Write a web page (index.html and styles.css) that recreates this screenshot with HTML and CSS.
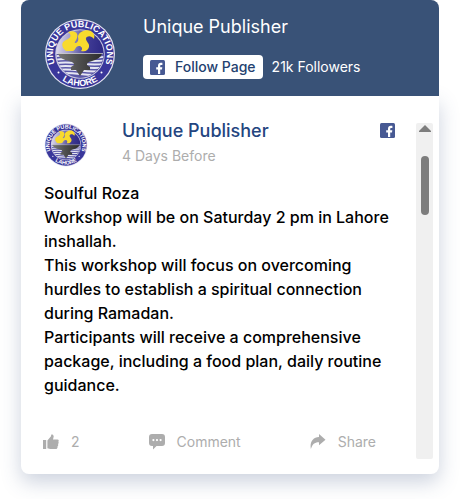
FILE: index.html
```html
<!DOCTYPE html>
<html lang="en">
<head>
<meta charset="utf-8">
<meta name="viewport" content="width=device-width, initial-scale=1">
<title>Unique Publisher</title>
<link rel="stylesheet" href="styles.css">
</head>
<body>
<main class="widget">
  <header class="page-head">
    <svg class="logo-large" viewBox="0 0 72 72" role="img" aria-label="Unique Publications Lahore">
      <defs>
        <linearGradient id="disc" x1="0" y1="0.3" x2="1" y2="0.4">
          <stop offset="0" stop-color="#dedaec"/>
          <stop offset="0.3" stop-color="#9d98ca"/>
          <stop offset="0.65" stop-color="#403b95"/>
          <stop offset="1" stop-color="#2c2883"/>
        </linearGradient>
        <linearGradient id="iron" x1="0" y1="0" x2="1" y2="0">
          <stop offset="0" stop-color="#777"/>
          <stop offset="0.45" stop-color="#505050"/>
          <stop offset="1" stop-color="#2c2c2c"/>
        </linearGradient>
        <clipPath id="inner"><circle cx="36" cy="36" r="23.5"/></clipPath>
        <path id="arc-top" d="M11 46.2A27 27 0 1 1 61 46.2"/>
        <path id="arc-bottom" d="M10 54.6A32 32 0 0 0 62 54.6"/>
      </defs>
      <g id="logo">
        <circle cx="36" cy="36" r="35" fill="#e4e4f2"/>
        <circle cx="36" cy="36" r="33.8" fill="#3a379b"/>
        <circle cx="36" cy="36" r="24.8" fill="#c9c9e0"/>
        <circle cx="36" cy="36" r="23.8" fill="url(#disc)"/>
        <g clip-path="url(#inner)">
          <path d="M10 36H62V62H10Z" fill="#5a57a8"/>
          <path d="M10 38.5Q20 36.5 36 38.5T62 38.5M10 42Q20 40 36 42T62 42M10 45.5Q20 43.5 36 45.5T62 45.5M10 49Q20 47 36 49T62 49M10 52.5Q20 50.5 36 52.5T62 52.5M10 56Q20 54 36 56T62 56" fill="none" stroke="#e6e6f2" stroke-width="1.8"/>
        </g>
        <path d="M14 35.5H58C57 40 52 42 48 43C44 44 43 45 43 47L46 49V52H40L36 58L32 52H27V49L30 47C30 45 29 44 25 43C20 42 15 40 14 35.5Z" fill="url(#iron)"/>
        <path d="M13 35.5H59" stroke="#dcdcdc" stroke-width="0.7"/>
        <path d="M22 33C17 29 17 24 22 22C27 20 28 17 24 14C30 12 35 15 33 20C32 23 30 24 31 25C33 25 35 23 34 19C34 14 42 11 47 13C50 15 51 18 50 21C47 17 43 18 42 20C41 23 46 25 45 29C44 32 42 34 37 33C39 31 38 29 36 28C31 27 32 33 28 33Z" fill="#f8da2d"/>
        <g class="logo-text">
          <text><textPath href="#arc-top" startOffset="50%">UNIQUE PUBLICATIONS</textPath></text>
          <text><textPath href="#arc-bottom" startOffset="50%">LAHORE</textPath></text>
        </g>
        <circle cx="14.5" cy="54.5" r="1" fill="#fff"/>
        <circle cx="57.5" cy="54.5" r="1" fill="#fff"/>
      </g>
    </svg>
    <div class="page-info">
      <h1 class="page-name">Unique Publisher</h1>
      <div class="page-actions">
        <button class="follow" type="button">
          <svg class="fb-icon" viewBox="0 0 15 15" aria-hidden="true">
            <g id="facebook">
              <rect width="15" height="15" rx="1.5" fill="#475993"/>
              <path d="M8 14V9.5H6.2V7.3H8V5.7C8 3.8 9.1 2.8 10.8 2.8C11.6 2.8 12.3 2.9 12.4 2.9V4.9H11.3C10.4 4.9 10.2 5.3 10.2 6V7.3H12.3L12 9.5H10.2V14Z" fill="#fff"/>
            </g>
          </svg>
          Follow Page
        </button>
        <span class="followers">21k Followers</span>
      </div>
    </div>
  </header>

  <section class="feed">
    <article class="post">
      <header class="post-head">
        <svg class="logo-small" viewBox="0 0 72 72" aria-hidden="true"><use href="#logo"/></svg>
        <div class="post-info">
          <h2 class="post-author">Unique Publisher</h2>
          <p class="post-date">4 Days Before</p>
        </div>
        <svg class="fb-icon" viewBox="0 0 15 15" aria-hidden="true"><use href="#facebook"/></svg>
      </header>
      <p class="post-text">Soulful Roza<br>Workshop will be on Saturday 2 pm in Lahore inshallah.<br>This workshop will focus on overcoming hurdles to establish a spiritual connection during Ramadan.<br>Participants will receive a comprehensive package, including a food plan, daily routine guidance.</p>
      <footer class="post-actions">
        <button class="action" type="button" aria-label="Like, 2">
          <svg class="action-icon" viewBox="0 0 16 16" aria-hidden="true"><path d="M0 6H3.2V15H0ZM4.4 6.4L8 2.3L8.2 .8C8.5 0 10.7 .3 10.7 2.6L10 5.6H14.5C16 5.8 16 7.3 15.3 7.8C16 8.6 15.7 9.6 15 10C15.5 11 15.2 11.9 14.5 12.4C14.8 13.9 14 15 12.7 15H7.2L4.4 14.2Z"/></svg>
          2
        </button>
        <button class="action" type="button">
          <svg class="action-icon" viewBox="0 0 16 16" aria-hidden="true"><path fill-rule="evenodd" d="M3 0H13Q16 0 16 3V9Q16 12 13 12H7.5L4 15.5V12H3Q0 12 0 9V3Q0 0 3 0ZM4.4 5A1.1 1.1 0 1 0 4.4 7.2A1.1 1.1 0 1 0 4.4 5ZM8 5A1.1 1.1 0 1 0 8 7.2A1.1 1.1 0 1 0 8 5ZM11.6 5A1.1 1.1 0 1 0 11.6 7.2A1.1 1.1 0 1 0 11.6 5Z"/></svg>
          Comment
        </button>
        <button class="action" type="button">
          <svg class="action-icon" viewBox="0 0 16 16" aria-hidden="true"><path d="M9 0L15.5 5.7L9 11.3V8.2C5 8 2.3 10 .9 15C-.5 8.5 2.8 3.2 9 3Z"/></svg>
          Share
        </button>
      </footer>
    </article>
    <div class="scroll-track" aria-hidden="true">
      <svg class="scroll-arrow" viewBox="0 0 12 7"><path d="M6 0L12 6V7H0V6Z"/></svg>
      <div class="scroll-thumb"></div>
    </div>
  </section>
</main>
</body>
</html>
```
FILE: styles.css
```css
* {
  box-sizing: border-box;
}

body {
  margin: 0;
  padding-bottom: 25px;
  background: #fff;
  color: #000;
  font-family: Inter, "Liberation Sans", sans-serif;
  font-size: 16px;
  line-height: 24px;
}

h1,
h2,
p {
  margin: 0;
}

button {
  border: 0;
  font: inherit;
  cursor: pointer;
}

svg {
  flex: none;
  display: block;
}

.logo-text {
  fill: #fff;
  font-family: "Liberation Sans", sans-serif;
  font-size: 9px;
  font-weight: 700;
  text-anchor: middle;
}

.widget {
  margin: 0 21px;
}

.page-head {
  position: relative;
  display: flex;
  gap: 27px;
  padding: 15px 23px 6px;
  border-radius: 8px 8px 0 0;
  background: #395277;
  color: #fff;
}

.logo-large {
  width: 72px;
  height: 72px;
  margin-top: 3px;
}

.page-name,
.post-author {
  font-size: 18px;
  font-weight: 400;
  line-height: 24px;
}

.page-actions {
  display: flex;
  align-items: center;
  gap: 9px;
  margin-top: 16px;
  font-size: 14px;
}

.follow {
  display: flex;
  align-items: center;
  gap: 10px;
  height: 24px;
  padding: 0 7px;
  border-radius: 4px;
  background: #fff;
  color: #24416f;
  font-weight: 500;
}

.fb-icon {
  width: 15px;
  height: 15px;
}

.feed {
  display: flex;
  padding: 27px 6px 15px 23px;
  border-radius: 0 0 8px 8px;
  background: #fff;
  box-shadow: 0 8px 20px rgba(57, 82, 129, 0.26);
}

.post {
  flex: 1;
  min-width: 0;
}

.post-head {
  display: flex;
  align-items: flex-start;
  padding-right: 21px;
}

.logo-small {
  width: 44px;
  height: 44px;
}

.post-info {
  flex: 1;
  margin: -4px 0 0 34px;
}

.post-author {
  color: #24457f;
  font-weight: 500;
}

.post-date {
  margin-top: 1px;
  color: #adadad;
  font-size: 14px;
}

.post-text {
  margin: 13px 24px 0 0;
  font-weight: 500;
}

.post-actions {
  display: flex;
  justify-content: space-between;
  margin: 33px 0 5px -1px;
  padding-right: 40px;
}

.action {
  display: flex;
  align-items: center;
  gap: 12px;
  padding: 0;
  background: none;
  color: #adadad;
  font-size: 14px;
}

.action-icon {
  width: 16px;
  height: 16px;
  fill: #adadad;
}

.scroll-track {
  display: flex;
  flex-direction: column;
  align-items: center;
  gap: 24px;
  width: 17px;
  padding-top: 2px;
  border-radius: 2px;
  background: #f0f0f0;
}

.scroll-arrow {
  width: 12px;
  height: 7px;
  fill: #7d7d7d;
}

.scroll-thumb {
  width: 8px;
  height: 59px;
  border-radius: 4px;
  background: #7d7d7d;
}
```
